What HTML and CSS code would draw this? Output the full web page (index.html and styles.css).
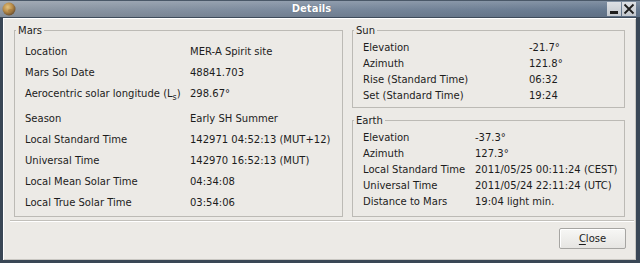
FILE: index.html
```html
<!DOCTYPE html>
<html>
<head>
<meta charset="utf-8">
<link rel="stylesheet" href="styles.css">
</head>
<body>
<div class="window">
  <div class="titlebar">
    <svg class="app-icon" width="14" height="14" viewBox="0 0 14 14">
      <defs>
        <radialGradient id="mars" cx="0.4" cy="0.35" r="0.65">
          <stop offset="0" stop-color="#e2c27e"/>
          <stop offset="0.55" stop-color="#b98d4a"/>
          <stop offset="1" stop-color="#6f5230"/>
        </radialGradient>
      </defs>
      <circle cx="7" cy="7" r="6.5" fill="url(#mars)"/>
      <ellipse cx="8.5" cy="8.5" rx="2.5" ry="1.5" fill="#9c7038" opacity="0.5"/>
    </svg>
    <div class="title">Details</div>
    <div class="wm-buttons">
      <span class="wm-btn"><svg width="14" height="14" viewBox="0 0 14 14"><rect x="3" y="9" width="8" height="3" fill="#1e1e1e"/></svg></span>
      <span class="wm-btn"><svg width="14" height="14" viewBox="0 0 14 14"><path d="M2.5 2.5 L11.5 11.5 M11.5 2.5 L2.5 11.5" stroke="#1e1e1e" stroke-width="1.8" fill="none"/></svg></span>
    </div>
  </div>
  <div class="client">
    <div class="frames">
      <fieldset class="frame mars">
        <legend>Mars</legend>
        <div class="grid mars-grid">
          <span>Location</span><span>MER-A Spirit site</span>
          <span>Mars Sol Date</span><span>48841.703</span>
          <span class="tall">Aerocentric solar longitude (L<sub>s</sub>)</span><span class="tall">298.67°</span>
          <span>Season</span><span>Early SH Summer</span>
          <span>Local Standard Time</span><span>142971 04:52:13 (MUT+12)</span>
          <span>Universal Time</span><span>142970 16:52:13 (MUT)</span>
          <span>Local Mean Solar Time</span><span>04:34:08</span>
          <span>Local True Solar Time</span><span>03:54:06</span>
        </div>
      </fieldset>
      <div class="right-col">
        <fieldset class="frame sun">
          <legend>Sun</legend>
          <div class="grid sun-grid">
            <span>Elevation</span><span>-21.7°</span>
            <span>Azimuth</span><span>121.8°</span>
            <span>Rise (Standard Time)</span><span>06:32</span>
            <span>Set (Standard Time)</span><span>19:24</span>
          </div>
        </fieldset>
        <fieldset class="frame earth">
          <legend>Earth</legend>
          <div class="grid earth-grid">
            <span>Elevation</span><span>-37.3°</span>
            <span>Azimuth</span><span>127.3°</span>
            <span>Local Standard Time</span><span>2011/05/25 00:11:24 (CEST)</span>
            <span>Universal Time</span><span>2011/05/24 22:11:24 (UTC)</span>
            <span>Distance to Mars</span><span>19:04 light min.</span>
          </div>
        </fieldset>
      </div>
    </div>
    <div class="separator"></div>
    <div class="actions">
      <button class="btn"><u>C</u>lose</button>
    </div>
  </div>
</div>
</body>
</html>
```
FILE: styles.css
```css
* { box-sizing: border-box; }
html, body { margin: 0; padding: 0; }
body {
  width: 640px;
  height: 263px;
  overflow: hidden;
  font-family: "DejaVu Sans", "Liberation Sans", sans-serif;
  font-size: 10px;
  color: #1c1c1c;
  background: #eceae6;
}
.window {
  width: 640px;
  height: 263px;
  display: flex;
  flex-direction: column;
}
.titlebar {
  height: 17px;
  flex: none;
  display: flex;
  align-items: center;
  background:
    linear-gradient(to bottom, rgba(255,255,255,0.18), rgba(255,255,255,0) 55%, rgba(0,0,0,0.08)),
    linear-gradient(to right, #8f99a5, #7b8a9d 45%, #64778e);
  border-top: 1px solid #4a5868;
}
.app-icon {
  margin-left: 2px;
  flex: none;
}
.title {
  flex: 1;
  text-align: center;
  color: #ffffff;
  font-weight: bold;
  font-size: 10px;
  line-height: 12px;
  text-shadow: 0 0 1px rgba(40,50,60,0.5);
}
.wm-buttons {
  display: flex;
  gap: 1px;
  margin-right: 4px;
  flex: none;
}
.wm-btn {
  width: 14px;
  height: 14px;
  display: block;
  background: linear-gradient(to bottom, #dde0e4, #c3c8ce);
}
.wm-btn svg { display: block; }
.client {
  flex: 1;
  display: flex;
  flex-direction: column;
  background: #eceae6;
  border-top: 1px solid #3e4b5a;
  border-left: 3px solid #3a4756;
  border-right: 4px solid #3a4756;
  border-bottom: 3px solid #3a4756;
  box-shadow: inset 1px 1px 0 #ffffff, inset -1px -1px 0 #c9c7c2;
}
.frames {
  display: flex;
  align-items: stretch;
  gap: 9px;
  margin: 6px 11px 0 11px;
  height: 193px;
}
.frame {
  margin: 0;
  padding: 0;
  min-width: 0;
  border: 1px solid #bcbab5;
}
.frame legend {
  margin-left: 1px;
  padding: 0 2px;
  line-height: 13px;
}
.mars { width: 329px; flex: none; }
.right-col {
  flex: 1;
  display: flex;
  flex-direction: column;
  gap: 6px;
}
.earth { flex: 1; }
.grid {
  display: grid;
  align-items: center;
  white-space: nowrap;
}
.grid span { line-height: 12px; }
.mars-grid {
  padding: 4px 0 0 10px;
  grid-template-columns: 165px auto;
  grid-template-rows: 21px 21px 25px 21px 21px 21px 21px 21px;
}
.mars-grid .tall { padding-bottom: 3px; }
sub {
  font-size: 8px;
  line-height: 0;
  vertical-align: -3px;
}
.sun-grid {
  padding: 3px 0 3px 10px;
  grid-template-columns: 166px auto;
  grid-auto-rows: 16px;
}
.earth-grid {
  padding: 3px 0 0 10px;
  grid-template-columns: 112px auto;
  grid-auto-rows: 16px;
}
.separator {
  height: 2px;
  margin: 3px 2px 0 7px;
  border-top: 1px solid #c2c0bb;
  border-bottom: 1px solid #ffffff;
}
.actions {
  display: flex;
  justify-content: flex-end;
  padding: 6px 10px 0 0;
}
.btn {
  width: 67px;
  height: 21px;
  font-family: "DejaVu Sans", "Liberation Sans", sans-serif;
  font-size: 10px;
  color: #1c1c1c;
  background: linear-gradient(to bottom, #f7f7f5, #e6e5e2);
  border: 1px solid #a6a5a2;
  border-radius: 2px;
  box-shadow: inset 1px 1px 0 #ffffff;
  padding: 0;
  line-height: 19px;
}
.btn u { text-decoration-thickness: 1px; text-underline-offset: 2px; }
```
